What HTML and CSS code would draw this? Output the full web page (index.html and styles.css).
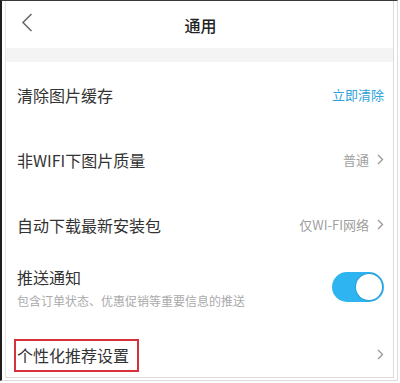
FILE: index.html
```html
<!DOCTYPE html>
<html lang="zh-CN">
<head>
<meta charset="utf-8">
<link rel="stylesheet" href="styles.css">
</head>
<body>
<div class="frame">
  <div class="screen">
    <header class="nav">
      <svg class="back" width="12" height="19" viewBox="0 0 12 19"><path d="M10.5 1 L2 9.5 L10.5 18" fill="none" stroke="#6b6b6b" stroke-width="1.6"/></svg>
      <div class="title">通用</div>
    </header>
    <div class="gap"></div>
    <div class="row">
      <div class="label">清除图片缓存</div>
      <div class="value blue">立即清除</div>
    </div>
    <div class="row">
      <div class="label">非WIFI下图片质量</div>
      <div class="value">普通<svg class="chev" width="7" height="11" viewBox="0 0 7 11"><path d="M1 1 L5.5 5.5 L1 10" fill="none" stroke="#9a9a9a" stroke-width="1.4"/></svg></div>
    </div>
    <div class="row">
      <div class="label">自动下载最新安装包</div>
      <div class="value">仅WI-FI网络<svg class="chev" width="7" height="11" viewBox="0 0 7 11"><path d="M1 1 L5.5 5.5 L1 10" fill="none" stroke="#9a9a9a" stroke-width="1.4"/></svg></div>
    </div>
    <div class="row">
      <div class="stack">
        <div class="label">推送通知</div>
        <div class="sub">包含订单状态、优惠促销等重要信息的推送</div>
      </div>
      <div class="toggle"><span class="knob"></span></div>
    </div>
    <div class="row">
      <div class="label marked">个性化推荐设置</div>
      <div class="value"><svg class="chev" width="7" height="11" viewBox="0 0 7 11"><path d="M1 1 L5.5 5.5 L1 10" fill="none" stroke="#9a9a9a" stroke-width="1.4"/></svg></div>
    </div>
  </div>
</div>
</body>
</html>
```

FILE: styles.css
```css
html, body {
  margin: 0;
  padding: 0;
  background: #fff;
}
body {
  width: 400px;
  height: 383px;
  overflow: hidden;
  font-family: "Noto Sans CJK SC", "Noto Sans", sans-serif;
}
.frame {
  box-sizing: border-box;
  width: 398px;
  height: 381px;
  border-left: 2px solid #1e1e1e;
  border-top: 1px solid #3a3a3a;
  border-right: 1px solid #dcdcdc;
  border-bottom: 1px solid #dcdcdc;
  padding-left: 3px;
  padding-right: 3px;
  padding-bottom: 2px;
  overflow: hidden;
}
.screen {
  box-sizing: border-box;
  height: 100%;
  border-left: 1px solid #e6e6e6;
  border-right: 1px solid #dcdcdc;
  border-bottom: 1px solid #dcdcdc;
  overflow: hidden;
  background: #fff;
}
.nav {
  height: 47px;
  display: flex;
  align-items: center;
  justify-content: center;
  position: relative;
}
.back {
  position: absolute;
  left: 15px;
  top: 12px;
}
.title {
  font-size: 16px;
  font-weight: 500;
  color: #222;
  margin-left: 2px;
}
.gap {
  height: 14px;
  background: #f4f4f4;
}
.row {
  height: 65px;
  display: flex;
  align-items: center;
  justify-content: space-between;
  padding: 0 9px 0 11px;
}
.label {
  font-size: 16px;
  color: #333;
  line-height: 20px;
}
.value {
  font-size: 13px;
  color: #a0a0a0;
  display: flex;
  align-items: center;
}
.value.blue {
  color: #2ea3dd;
}
.chev {
  margin-left: 8px;
}
.stack {
  display: flex;
  flex-direction: column;
  gap: 6px;
  margin-top: -4px;
}
.sub {
  font-size: 12px;
  color: #aaa;
  line-height: 16px;
}
.toggle {
  width: 52px;
  height: 30px;
  border-radius: 15px;
  background: #2fb4f2;
  position: relative;
  margin-top: -6px;
}
.knob {
  position: absolute;
  right: 2px;
  top: 2px;
  width: 26px;
  height: 26px;
  border-radius: 50%;
  background: #fff;
  box-shadow: 0 0 1px 1px rgba(0,0,0,0.12);
}
.marked {
  position: relative;
}
.marked::after {
  content: "";
  position: absolute;
  left: -3px;
  right: -10px;
  top: -6px;
  bottom: -7px;
  border: 2px solid #d7313b;
}
```
